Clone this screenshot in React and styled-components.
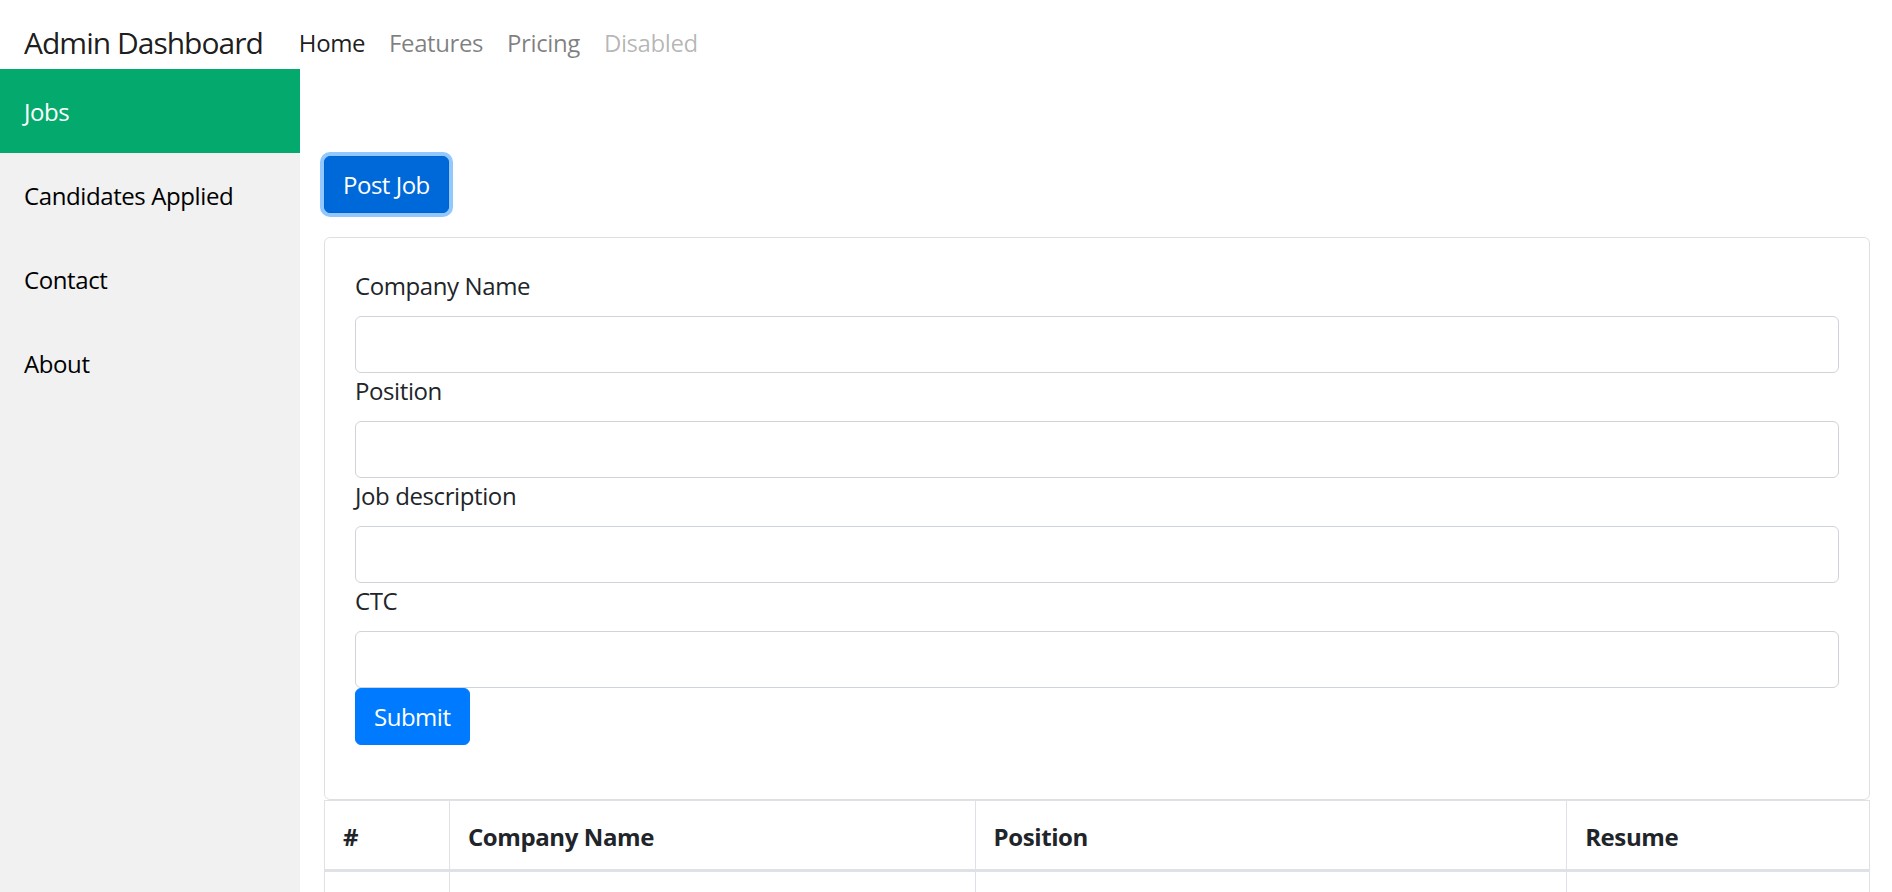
import styled, { createGlobalStyle } from 'styled-components'

const GlobalStyle = createGlobalStyle`
  html, body {
    margin: 0;
    height: 100%;
    overflow: hidden;
  }
  body {
    font-family: "Open Sans", "Liberation Sans", sans-serif;
    letter-spacing: -0.025em;
    color: #212529;
    background: #fff;
  }
  * {
    box-sizing: border-box;
  }
`

const sideLinks = ['Jobs', 'Candidates Applied', 'Contact', 'About']
const fields = ['Company Name', 'Position', 'Job description', 'CTC']

export default function App() {
  return (
    <>
      <GlobalStyle />
      <Navbar>
        <Brand href="#">Admin Dashboard</Brand>
        <NavList>
          <NavLink href="#" tone="active">Home</NavLink>
          <NavLink href="#">Features</NavLink>
          <NavLink href="#">Pricing</NavLink>
          <NavLink href="#" tone="disabled">Disabled</NavLink>
        </NavList>
      </Navbar>

      <Layout>
        <Sidebar>
          {sideLinks.map((name, idx) => (
            <SideLink key={name} href="#" active={idx === 0 ? 1 : 0}>{name}</SideLink>
          ))}
        </Sidebar>

        <Main>
          <PostButton type="button">Post Job</PostButton>
          <Card>
            <Form onSubmit={e => e.preventDefault()}>
              {fields.map(label => (
                <Field key={label}>
                  <Label>{label}</Label>
                  <Input type="text" />
                </Field>
              ))}
              <SubmitButton type="submit">Submit</SubmitButton>
            </Form>
          </Card>

          <Table>
            <colgroup>
              <col style={{ width: 125 }} />
              <col style={{ width: 526 }} />
              <col style={{ width: 592 }} />
              <col style={{ width: 303 }} />
            </colgroup>
            <thead>
              <tr>
                <th>#</th>
                <th>Company Name</th>
                <th>Position</th>
                <th>Resume</th>
              </tr>
            </thead>
            <tbody>
              <tr>
                <td />
                <td />
                <td />
                <td />
              </tr>
            </tbody>
          </Table>
        </Main>
      </Layout>
    </>
  )
}

const Navbar = styled.nav`
  display: flex;
  align-items: center;
  height: 69px;
  padding: 15px 24px 0;
`

const Brand = styled.a`
  font-size: 30px;
  line-height: 45px;
  letter-spacing: -0.033em;
  color: rgba(0, 0, 0, 0.9);
  text-decoration: none;
  margin-right: 24px;
`

const NavList = styled.div`
  display: flex;
  align-items: center;
`

const NavLink = styled.a`
  font-size: 24px;
  line-height: 36px;
  padding: 13px 12px 11px;
  text-decoration: none;
  color: ${props =>
    props.tone === 'active' ? 'rgba(0, 0, 0, 0.9)'
    : props.tone === 'disabled' ? 'rgba(0, 0, 0, 0.3)'
    : 'rgba(0, 0, 0, 0.5)'};
`

const Layout = styled.div`
  display: flex;
  height: calc(100vh - 69px);
`

const Sidebar = styled.aside`
  flex: 0 0 300px;
  background: #f1f1f1;
  display: flex;
  flex-direction: column;
`

const SideLink = styled.a`
  display: block;
  padding: 25px 24px 23px;
  font-size: 24px;
  line-height: 36px;
  text-decoration: none;
  color: ${props => (props.active ? '#fff' : '#000')};
  background: ${props => (props.active ? '#04AA6D' : 'transparent')};
`

const Main = styled.main`
  flex: 1;
  padding: 87px 22px 0 24px;
  display: flex;
  flex-direction: column;
  align-items: flex-start;
`

const BaseButton = styled.button`
  font-family: inherit;
  font-size: 24px;
  line-height: 36px;
  letter-spacing: -0.02em;
  padding: 10px 18px 9px;
  color: #fff;
  border-radius: 6px;
  cursor: pointer;
`

const PostButton = styled(BaseButton)`
  background: #0069d9;
  border: 1px solid #0062cc;
  box-shadow: 0 0 0 4px rgba(38, 143, 255, 0.5);
  margin-bottom: 24px;
`

const SubmitButton = styled(BaseButton)`
  background: #007bff;
  border: 1px solid #007bff;
`

const Card = styled.div`
  align-self: stretch;
  border: 1px solid rgba(0, 0, 0, 0.125);
  border-radius: 6px;
  padding: 30px;
`

const Form = styled.form`
  display: flex;
  flex-direction: column;
  align-items: flex-start;
  margin-bottom: 24px;
`

const Field = styled.div`
  align-self: stretch;
  display: flex;
  flex-direction: column;
`

const Label = styled.label`
  font-size: 24px;
  line-height: 36px;
  margin-bottom: 12px;
  color: #212529;
`

const Input = styled.input`
  height: 57px;
  width: 100%;
  border: 1px solid #ced4da;
  border-radius: 6px;
  padding: 9px 18px;
  font-family: inherit;
  font-size: 24px;
  color: #495057;
  outline: none;
`

const Table = styled.table`
  align-self: stretch;
  border-collapse: collapse;
  table-layout: fixed;
  font-size: 24px;
  line-height: 36px;
  color: #212529;
  border: 1px solid #dee2e6;

  th, td {
    border: 1px solid #dee2e6;
    padding: 18px 18px 14px;
    text-align: left;
    vertical-align: bottom;
  }

  th {
    font-weight: 700;
  }

  thead th {
    border-bottom: 3px solid #dee2e6;
  }

  td {
    height: 72px;
  }
`
